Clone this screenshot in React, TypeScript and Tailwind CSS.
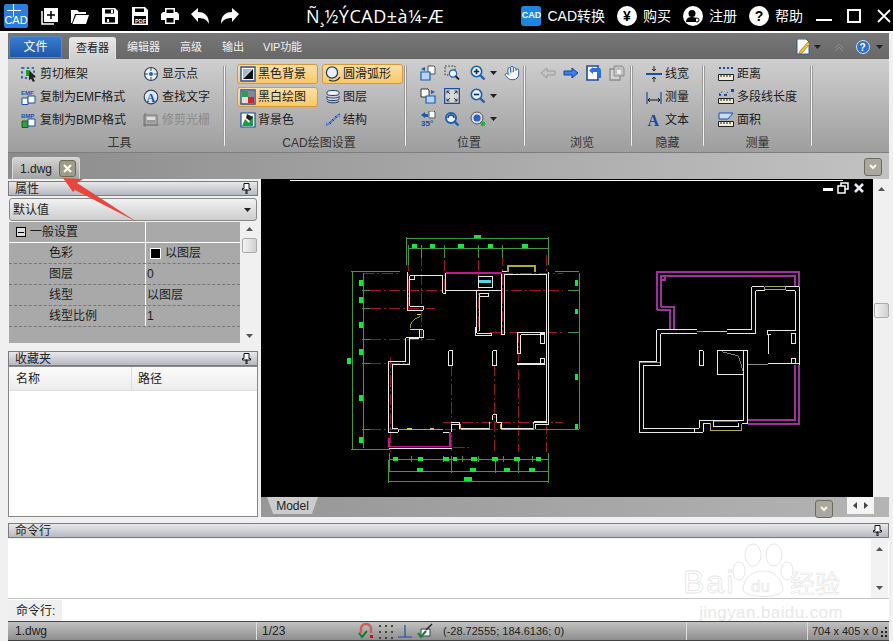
import React from "react";
import { Hand } from "lucide-react";

const Ico = ({ children, vb = "0 0 16 16", className = "w-4 h-4 shrink-0" }: { children: React.ReactNode; vb?: string; className?: string }) => (
  <svg viewBox={vb} className={className}>
    {children}
  </svg>
);

const Caret = () => (
  <svg viewBox="0 0 7 4" className="w-[7px] h-[4px] shrink-0">
    <path d="M0 0h7L3.5 4z" fill="#222" />
  </svg>
);

const Zoomer = ({ sign }: { sign: "+" | "-" }) => (
  <Ico>
    <circle cx="6.5" cy="6.5" r="5.2" fill="#e8f0fa" stroke="#1c5fb0" strokeWidth="1.6" />
    <path d="M3.8 6.5h5.4" stroke="#102a50" strokeWidth="1.6" />
    {sign === "+" && <path d="M6.5 3.8v5.4" stroke="#102a50" strokeWidth="1.6" />}
    <path d="M10.5 10.5l4 4" stroke="#1c5fb0" strokeWidth="2.4" />
  </Ico>
);

const icons: Record<string, React.ReactNode> = {
  cut: (
    <Ico>
      <path d="M1 2h12v10H1z" fill="none" stroke="#1450a8" strokeWidth="1.6" strokeDasharray="2.4 2.4" />
      <path d="M5 4h3v6H5z" fill="#14a030" />
      <path d="M8 4l7 7-3 .5 2 3.5-2 1-2-3.5-2 2z" fill="#222" />
    </Ico>
  ),
  emf: (
    <Ico>
      <text x="0" y="5.5" fontSize="6" fontWeight="700" fill="#1450c0" fontFamily="Liberation Sans">EMF</text>
      <path d="M1 9h6v6.5H1z" fill="#fff" stroke="#1450a8" />
      <path d="M7 7h7v7H7z" fill="#fff" stroke="#1450a8" />
    </Ico>
  ),
  bmp: (
    <Ico>
      <text x="0" y="5.5" fontSize="6" fontWeight="700" fill="#1450c0" fontFamily="Liberation Sans">BMP</text>
      <path d="M1 9h6v6.5H1z" fill="#30a040" stroke="#186020" />
      <path d="M7 7h7v7H7z" fill="#fff" stroke="#1450a8" />
    </Ico>
  ),
  point: (
    <Ico>
      <circle cx="8" cy="8" r="6.5" fill="#eef2f8" stroke="#38465c" strokeWidth="1.2" />
      <path d="M8 1v4M8 11v4M1 8h4M11 8h4" stroke="#38465c" />
      <circle cx="8" cy="8" r="2" fill="#1c60c8" />
    </Ico>
  ),
  find: (
    <Ico>
      <circle cx="8" cy="8" r="6.8" fill="#dce6f4" stroke="#38465c" strokeWidth="1.2" />
      <text x="3.4" y="12.5" fontSize="12" fontWeight="700" fill="#1450b0" fontFamily="Liberation Serif">A</text>
    </Ico>
  ),
  trim: (
    <Ico>
      <path d="M2 1v14M0 13h16M1 3h13v10H1z" fill="none" stroke="#777" />
      <path d="M4 5h8v6H4z" fill="#999" />
      <path d="M4 5h8v3H4z" fill="#ddd" />
    </Ico>
  ),
  blackBg: (
    <Ico>
      <path d="M1 1h14v14H1z" fill="#f4f4f4" stroke="#24509c" strokeWidth="1.4" />
      <path d="M13 3v10H3z" fill="#111" />
      <path d="M3 3h9L3 12z" fill="#a8b8d0" />
    </Ico>
  ),
  arc: (
    <Ico>
      <circle cx="7" cy="6.5" r="5.6" fill="#e8f0fa" stroke="#24406c" strokeWidth="1.3" />
      <path d="M4 14c4 2 9 1 11-3" fill="none" stroke="#222" strokeWidth="1.2" />
    </Ico>
  ),
  bw: (
    <Ico>
      <path d="M1 1h14v14H1z" fill="#fff" stroke="#24509c" strokeWidth="1.4" />
      <path d="M2 2h6v6H2z" fill="#2ca050" />
      <path d="M8 8h6v6H8z" fill="#d02828" />
      <path d="M2 8h6v6H2z" fill="#e0e0e0" />
      <path d="M8 2h6v6H8z" fill="#888" />
    </Ico>
  ),
  layers: (
    <Ico>
      <path d="M2 3c0-2 12-2 12 0v2c0 2-12 2-12 0z" fill="#eef2f8" stroke="#24406c" />
      <path d="M2 7.5c0 2 12 2 12 0M2 7.5v2.5c0 2 12 2 12 0V7.5" fill="#dbe4f0" stroke="#24406c" />
      <path d="M2 12c0 2.5 12 2.5 12 0" fill="none" stroke="#24406c" />
    </Ico>
  ),
  bgColor: (
    <Ico>
      <path d="M1 1h14v14H1z" fill="#fff" stroke="#1c4c9c" strokeWidth="1.2" />
      <path d="M2 14L5 7l4 4 4-8v11z" fill="#1c9c3c" />
      <path d="M7 2l6 3-3 4-4-3z" fill="#222" />
    </Ico>
  ),
  struct: (
    <Ico>
      <path d="M1 13C4 13 5 10 8 8s4-5 7-6" fill="none" stroke="#2c60c0" strokeWidth="1.6" />
      <path d="M1 10c2 4 5 2 7-2s5-6 7-3" fill="none" stroke="#6c90d8" strokeWidth="1.4" />
      <path d="M4 10l2 2M7 7l2 2M10 4l2 2" stroke="#24406c" />
    </Ico>
  ),
  posA: (
    <Ico>
      <path d="M8 1h6l1 1v7H8z" fill="#fff" stroke="#555" />
      <path d="M1 7h9v8H1z" fill="#b8d4f4" stroke="#1c5cb0" strokeWidth="1.2" />
      <path d="M1 4l4-2v4z" fill="#1c5cb0" />
    </Ico>
  ),
  posB: (
    <Ico>
      <path d="M1 1h7l1 1v7H1z" fill="#fff" stroke="#333" />
      <path d="M6 8h9v7H6z" fill="#b8d4f4" stroke="#1c5cb0" strokeWidth="1.2" />
      <path d="M15 4l-4-2v4z" fill="#1c5cb0" />
    </Ico>
  ),
  rotate: (
    <Ico>
      <path d="M9 0h5l1 1v6H9z" fill="#fff" stroke="#555" />
      <path d="M1 4l4-3v2h3v3H5v1z" fill="#1c5cb0" />
      <text x="1" y="15" fontSize="8" fontWeight="700" fill="#1450a0" fontFamily="Liberation Sans">35°</text>
    </Ico>
  ),
  window: (
    <Ico>
      <path d="M1 1h10v9H1z" fill="none" stroke="#333" strokeDasharray="1.6 1.6" />
      <circle cx="9" cy="8.5" r="3.6" fill="#eef4fc" stroke="#1c5fb0" strokeWidth="1.2" />
      <path d="M11.5 11l3.5 3.5" stroke="#222" strokeWidth="1.8" />
    </Ico>
  ),
  fit: (
    <Ico>
      <path d="M.7.7h14.6v14.6H.7z" fill="#d8d8d8" stroke="#1c4c9c" strokeWidth="1.3" />
      <path d="M3 3l3 3M3 3v2.5M3 3h2.5M13 3l-3 3M13 3v2.5M13 3h-2.5M3 13l3-3M3 13v-2.5M3 13h2.5M13 13l-3-3M13 13v-2.5M13 13h-2.5" stroke="#222" strokeWidth=".9" fill="none" />
    </Ico>
  ),
  prevZoom: (
    <Ico>
      <circle cx="7" cy="7" r="5" fill="#e8f0fa" stroke="#1c5fb0" strokeWidth="2" />
      <path d="M4 7a3 3 0 0 1 6 0" fill="none" stroke="#14408c" strokeWidth="1.4" />
      <path d="M10 10l4.5 4.5" stroke="#1c5fb0" strokeWidth="2.4" />
    </Ico>
  ),
  globe: (
    <Ico>
      <circle cx="7" cy="7" r="6" fill="#dde" stroke="#555" />
      <circle cx="7" cy="7" r="3.6" fill="#2464c4" />
      <path d="M11 11l2.5 2.5" stroke="#444" strokeWidth="2" />
      <circle cx="13" cy="13" r="2.4" fill="#30b040" />
    </Ico>
  ),
  backGray: (
    <Ico>
      <path d="M1 8l6-5v3h8v4H7v3z" fill="#c4c4c4" stroke="#9a9a9a" />
    </Ico>
  ),
  forward: (
    <Ico>
      <path d="M15 8L9 3v3H1v4h8v3z" fill="#3a80e8" stroke="#14409c" />
    </Ico>
  ),
  undoView: (
    <Ico>
      <path d="M1 1h11v14H1z" fill="#fff" stroke="#1c4c9c" strokeWidth="1.6" />
      <path d="M7 3h7l1 2v8h-4V7H7v2L3 5.500 7 2z" fill="#2c70d8" />
    </Ico>
  ),
  redoView: (
    <Ico>
      <path d="M1 4h10v11H1z" fill="#d4d4d4" stroke="#8c8c8c" strokeWidth="1.3" />
      <path d="M5 1h8l2 2v8H5z" fill="#c0c0c0" stroke="#8c8c8c" />
      <path d="M8 5h4v4H8z" fill="#ececec" />
    </Ico>
  ),
  lineWidth: (
    <Ico>
      <path d="M0 8h16" stroke="#1450b0" strokeWidth="2" />
      <path d="M8 0v5M6 3l2 2 2-2M8 16v-5M6 13l2-2 2 2" stroke="#222" fill="none" />
    </Ico>
  ),
  measure: (
    <Ico>
      <path d="M1 3v12M15 3v12" stroke="#1450a8" strokeWidth="1.2" />
      <path d="M2 11h12M4 9l-2 2 2 2M12 9l2 2-2 2" stroke="#111" fill="none" />
    </Ico>
  ),
  text: (
    <Ico className="w-4 h-4 shrink-0 overflow-visible">
      <text x="1.500" y="14" fontSize="16" fontWeight="700" fill="#1448a8" fontFamily="Liberation Serif">A</text>
    </Ico>
  ),
  dist: (
    <Ico>
      <path d="M1 2h14" stroke="#1450b0" strokeWidth="2" strokeDasharray="2 2" />
      <path d="M.5 8.500h15v6H.500z" fill="#f0ecd8" stroke="#222" />
      <path d="M3 9v2M6 9v2M9 9v2M12 9v2" stroke="#222" />
    </Ico>
  ),
  poly: (
    <Ico>
      <path d="M1 5l4-3M7 6l3-3" stroke="#1450b0" strokeDasharray="1.500 1" />
      <path d="M1 5h2v2H1zM6 5h3v2H6zM13 0h3v3h-3z" fill="#1450b0" />
      <path d="M.5 9.500h15v5H.500z" fill="#f0ecd8" stroke="#222" />
      <path d="M3 10v2M6 10v2M9 10v2M12 10v2" stroke="#222" />
    </Ico>
  ),
  area: (
    <Ico>
      <path d="M1 1h14l-5 6H1z" fill="#c8dcf4" stroke="#1450b0" />
      <path d="M.5 9.500h15v5H.500z" fill="#f0ecd8" stroke="#222" />
      <path d="M3 10v2M6 10v2M9 10v2M12 10v2" stroke="#222" />
    </Ico>
  ),
};

const Sep = () => <div className="w-[3px] my-[6px] rounded-sm bg-[#f2f2f2] border-x border-[#9a9a9a] shrink-0" />;

const Item = ({ icon, label, disabled }: { icon: string; label: string; disabled?: boolean }) => (
  <div className="flex items-center h-[20px] gap-[3px]">
    {icons[icon]}
    <span className={`text-xs whitespace-nowrap ${disabled ? "text-[#8a8a8a]" : "text-[#1c1c1c]"}`}>{label}</span>
  </div>
);

const Toggle = ({ icon, label, active }: { icon: string; label: string; active?: boolean }) => (
  <div
    className={`flex items-center w-[81px] h-[20px] pl-[2px] gap-[2px] rounded-[3px] border ${
      active ? "border-[#d4993a] bg-gradient-to-b from-[#f9e0a6] to-[#fcc766]" : "border-transparent"
    }`}
  >
    {icons[icon]}
    <span className="text-xs text-[#1c1c1c] whitespace-nowrap">{label}</span>
  </div>
);

const Group = ({ width, label, labelClass = "", children }: { width: string; label: string; labelClass?: string; children: React.ReactNode }) => (
  <div className={`${width} flex flex-col shrink-0`}>
    <div className="h-[73px] pt-[5px]">{children}</div>
    <div className={`h-[20px] pt-px flex items-center justify-center text-xs text-[#333] ${labelClass}`}>{label}</div>
  </div>
);

const Pin = () => (
  <svg viewBox="0 0 9 11" className="w-[9px] h-[11px] shrink-0">
    <path d="M2 .500h5v5h1.500v1.500H.500V5.500H2zM4 7h1v4H4z" fill="#fff" stroke="#111" strokeWidth="1" />
  </svg>
);

const PanelHeader = ({ title, pin = true }: { title: string; pin?: boolean }) => (
  <div className="h-[15px] flex items-center justify-between pl-[6px] pr-[6px] border border-[#7c7c7c] bg-gradient-to-b from-[#e8e9ec] to-[#b6b9c0] shrink-0">
    <span className="text-xs leading-none text-[#222]">{title}</span>
    {pin && <Pin />}
  </div>
);

const ChevronBtn = () => (
  <div className="w-[18px] h-[18px] rounded-[3px] border border-[#6c6c5c] bg-[#a8a8a0] flex items-center justify-center shrink-0">
    <svg viewBox="0 0 8 6" className="w-2 h-[6px]">
      <path d="M1 1l3 3 3-3" fill="none" stroke="#fff6d8" strokeWidth="2" />
    </svg>
  </div>
);

const PropRow = ({ name, value, swatch }: { name: string; value: string; swatch?: boolean }) => (
  <div className="h-[21px] flex border-b border-dashed border-[#777]">
    <div className="w-[137px] pl-[40px] flex items-center text-xs text-[#1c1c1c] border-r border-white shrink-0">{name}</div>
    <div className="pl-px flex items-center gap-[4px] text-xs text-[#1c1c1c]">
      {swatch && <span className="w-[11px] h-[11px] ml-[3px] bg-black border border-white" />}
      {value}
    </div>
  </div>
);

const TopBtn = ({ children }: { children: React.ReactNode }) => <div className="w-[18px] h-[20px] flex items-center justify-center">{children}</div>;

const NavBtn = ({ children, label }: { children: React.ReactNode; label: string }) => (
  <div className="flex items-center gap-[6px]">
    {children}
    <span className="text-sm text-white whitespace-nowrap">{label}</span>
  </div>
);

const RoundIcon = ({ children }: { children: React.ReactNode }) => (
  <div className="w-5 h-5 rounded-full bg-white text-black flex items-center justify-center text-sm font-bold leading-none shrink-0">{children}</div>
);

const TitleBar = () => (
  <div className="h-[31px] bg-black flex items-center shrink-0">
    <div className="ml-[4px] w-6 h-6 bg-[#2c7de0] rounded-[2px] relative overflow-hidden text-white text-[11px] leading-none flex items-end justify-center pb-[2px] shrink-0">
      CAD
      <span className="absolute left-[9px] top-0 w-px h-[13px] bg-white" />
      <span className="absolute left-[3px] top-[6px] w-[14px] h-px bg-white" />
    </div>
    <div className="ml-[13px] flex items-center gap-[12px]">
      <TopBtn>
        <svg viewBox="0 0 18 18" className="w-[18px] h-[18px]">
          <path d="M1 4v13h12" fill="none" stroke="#fff" strokeWidth="1.500" />
          <path d="M3 1h14v14H3z" fill="#fff" />
          <path d="M10 4v8M6 8h8" stroke="#000" strokeWidth="1.500" />
        </svg>
      </TopBtn>
      <TopBtn>
        <svg viewBox="0 0 18 16" className="w-[18px] h-4">
          <path d="M0 2h6l2 2h7v2H4L1 15H0z" fill="#fff" />
          <path d="M5 7h13l-3 9H1.500z" fill="#fff" />
        </svg>
      </TopBtn>
      <TopBtn>
        <svg viewBox="0 0 16 16" className="w-4 h-4">
          <path fillRule="evenodd" d="M0 0h13l3 3v13H0zM3 1.500v4h9v-4zM3 9v5.500h10V9z" fill="#fff" />
          <path d="M9 2h2v3H9zM5 11h2v3H5z" fill="#fff" />
        </svg>
      </TopBtn>
      <TopBtn>
        <svg viewBox="0 0 16 18" className="w-4 h-[18px]">
          <path fillRule="evenodd" d="M0 0h13l3 3v15H0zM3 1.500v3.500h9V1.500zM2 9v7.500h12V9z" fill="#fff" />
          <text x="3" y="15.500" fontSize="5.500" fontWeight="700" fill="#fff" fontFamily="Liberation Sans">PDF</text>
        </svg>
      </TopBtn>
      <TopBtn>
        <svg viewBox="0 0 18 16" className="w-[18px] h-4">
          <path fillRule="evenodd" d="M4 0h10v4h2l2 2v6h-4v4H4v-4H0V6l2-2h2zM5.500 1.500V5h7V1.500zM5.500 10v4.500h7V10z" fill="#fff" />
        </svg>
      </TopBtn>
      <TopBtn>
        <svg viewBox="0 0 18 16" className="w-[18px] h-4">
          <path d="M0 6l7-6v4c6 0 11 3 11 12-2-4-5-6-11-6v4z" fill="#fff" />
        </svg>
      </TopBtn>
      <TopBtn>
        <svg viewBox="0 0 18 16" className="w-[18px] h-4">
          <path d="M18 6l-7-6v4C5 4 0 7 0 16c2-4 5-6 11-6v4z" fill="#fff" />
        </svg>
      </TopBtn>
    </div>
    <div className="ml-[67px] text-[18px] tracking-[0.5px] leading-none text-white whitespace-nowrap font-['Open_Sans',sans-serif]">Ñ¸½ÝCAD±à¼-Æ</div>
    <div className="ml-auto flex items-center gap-[12px] pr-[2px]">
      <NavBtn label="CAD转换">
        <div className="w-5 h-5 rounded-[3px] bg-[#1f86e0] text-white text-[9px] font-bold leading-none flex items-center justify-center shrink-0">CAD</div>
      </NavBtn>
      <NavBtn label="购买">
        <RoundIcon>¥</RoundIcon>
      </NavBtn>
      <NavBtn label="注册">
        <div className="w-5 h-5 rounded-full bg-white shrink-0">
          <svg viewBox="0 0 20 20" className="w-5 h-5">
            <circle cx="9" cy="7.500" r="3.500" fill="#000" />
            <path d="M3 16c0-4 3-5 6-5s4 1 4 1v4z" fill="#000" />
            <circle cx="14" cy="14" r="2" fill="none" stroke="#000" />
          </svg>
        </div>
      </NavBtn>
      <NavBtn label="帮助">
        <RoundIcon>?</RoundIcon>
      </NavBtn>
      <div className="w-4 h-[2px] bg-white mt-[8px] ml-px" />
      <div className="w-[14px] h-[14px] border-2 border-white ml-[3px]" />
      <svg viewBox="0 0 14 14" className="w-[14px] h-[14px] ml-[4px]">
        <path d="M1 1l12 12M13 1L1 13" stroke="#fff" strokeWidth="1.800" />
      </svg>
    </div>
  </div>
);

const RibbonTabs = () => (
  <div className="h-[26px] bg-gradient-to-b from-[#777777] to-[#686868] flex items-end shrink-0">
    <div className="ml-px mb-px w-[53px] h-[22px] rounded-t-[3px] bg-gradient-to-b from-[#3a7cd0] to-[#1f58a8] border border-[#5a88c0] text-white text-xs flex items-center justify-center">文件</div>
    <div className="ml-[7px] w-[47px] h-[22px] rounded-t-[3px] bg-gradient-to-b from-[#e8e8e8] to-[#cfcfcf] border border-b-0 border-[#e4e4e4] text-[11px] text-[#222] flex items-center justify-center">查看器</div>
    <div className="ml-[11px] h-[22px] text-[11px] text-[#f0f0f0] flex items-center gap-[20px] mb-px">
      <span>编辑器</span>
      <span>高级</span>
      <span>输出</span>
      <span className="-ml-px tracking-[-0.2px]">VIP功能</span>
    </div>
    <div className="ml-auto pr-[6px] h-[22px] mb-px flex items-center text-white">
      <svg viewBox="0 0 16 16" className="w-4 h-4">
        <path d="M2 0h9l3 3v12H2z" fill="#fff" stroke="#2c5ca0" />
        <path d="M15 5L7 14l-3 1 1-3 8-9z" fill="#f0c030" stroke="#a05020" strokeWidth=".6" />
      </svg>
      <span className="ml-[3px]"><Caret /></span>
      <svg viewBox="0 0 10 8" className="w-[10px] h-2 ml-[13px]">
        <path d="M1 5l4-4 4 4M1 8l4-4 4 4" fill="none" stroke="#8c8c8c" />
      </svg>
      <svg viewBox="0 0 14 14" className="w-[14px] h-[14px] ml-[12px]">
        <circle cx="7" cy="7" r="6.500" fill="#2c70d0" stroke="#cfe0f8" />
        <text x="3.500" y="11" fontSize="10" fontWeight="700" fill="#fff" fontFamily="Liberation Sans">?</text>
      </svg>
      <span className="ml-[6px]"><Caret /></span>
    </div>
  </div>
);

const Ribbon = () => (
  <div className="h-[94px] bg-gradient-to-b from-[#cfcfcf] to-[#9e9e9e] border-b border-[#7e7e7e] flex shrink-0">
    <Group width="w-[215px]" label="工具" labelClass="pl-[8px]">
      <div className="pl-[13px] grid grid-cols-[122px_1fr] gap-y-[3px]">
        <Item icon="cut" label="剪切框架" />
        <Item icon="point" label="显示点" />
        <Item icon="emf" label="复制为EMF格式" />
        <Item icon="find" label="查找文字" />
        <Item icon="bmp" label="复制为BMP格式" />
        <Item icon="trim" label="修剪光栅" disabled />
      </div>
    </Group>
    <Sep />
    <Group width="w-[178px]" label="CAD绘图设置" labelClass="pl-[8px]">
      <div className="pl-[11px] grid grid-cols-[85px_81px] gap-y-[3px]">
        <Toggle icon="blackBg" label="黑色背景" active />
        <Toggle icon="arc" label="圆滑弧形" active />
        <Toggle icon="bw" label="黑白绘图" active />
        <Toggle icon="layers" label="图层" />
        <Toggle icon="bgColor" label="背景色" />
        <Toggle icon="struct" label="结构" />
      </div>
    </Group>
    <Sep />
    <Group width="w-[116px]" label="位置" labelClass="pl-[8px]">
      <div className="pl-[13px] pt-px grid grid-cols-[24px_26px_34px_16px] gap-y-[7px]">
        {icons.posA}
        {icons.window}
        <div className="flex items-center gap-[4px]"><Zoomer sign="+" /><Caret /></div>
        <Hand className="w-4 h-4 text-[#2c5ca0] fill-white" strokeWidth={1.500} />
        {icons.posB}
        {icons.fit}
        <div className="flex items-center gap-[4px]"><Zoomer sign="-" /><Caret /></div>
        <div />
        {icons.rotate}
        {icons.prevZoom}
        <div className="flex items-center gap-[4px]">{icons.globe}<Caret /></div>
      </div>
    </Group>
    <Sep />
    <Group width="w-[104px]" label="浏览" labelClass="pl-[8px]">
      <div className="pl-[14px] pt-px flex gap-[7px]">
        {icons.backGray}
        {icons.forward}
        {icons.undoView}
        {icons.redoView}
      </div>
    </Group>
    <Sep />
    <Group width="w-[69px]" label="隐藏">
      <div className="pl-[13px] flex flex-col gap-[3px]">
        <Item icon="lineWidth" label="线宽" />
        <Item icon="measure" label="测量" />
        <Item icon="text" label="文本" />
      </div>
    </Group>
    <Sep />
    <Group width="w-[105px]" label="测量">
      <div className="pl-[13px] flex flex-col gap-[3px]">
        <Item icon="dist" label="距离" />
        <Item icon="poly" label="多段线长度" />
        <Item icon="area" label="面积" />
      </div>
    </Group>
    <Sep />
  </div>
);

const DocStrip = () => (
  <div className="h-[26px] bg-gradient-to-r from-[#8c8c8c] to-[#c2c2c2] flex items-end shrink-0">
    <div className="ml-[4px] w-[68px] h-[22px] rounded-t-[3px] border border-b-0 border-[#d8d8d8] bg-gradient-to-b from-[#d4d4d4] to-[#a4a4a4] flex items-center justify-between pl-[7px] pr-[3px]">
      <span className="text-xs text-[#222]">1.dwg</span>
      <div className="w-[17px] h-[17px] rounded-[3px] border border-[#6c6c50] bg-[#9c9c8c] flex items-center justify-center">
        <svg viewBox="0 0 9 9" className="w-[9px] h-[9px]">
          <path d="M1 1l7 7M8 1L1 8" stroke="#fffbe8" strokeWidth="2.200" />
        </svg>
      </div>
    </div>
    <div className="ml-auto mr-[7px] mb-[3px]"><ChevronBtn /></div>
  </div>
);

const ScrollArrows = ({ children }: { children: React.ReactNode }) => (
  <div className="w-[18px] bg-[#f0f0f0] flex flex-col items-center justify-between py-[5px] shrink-0">{children}</div>
);

const UpArrow = () => <svg viewBox="0 0 7 4" className="w-[7px] h-1"><path d="M0 4h7L3.500 0z" fill="#555" /></svg>;
const DownArrow = () => <svg viewBox="0 0 7 4" className="w-[7px] h-1"><path d="M0 0h7L3.500 4z" fill="#555" /></svg>;

const Thumb = () => <div className="w-[15px] h-[15px] rounded-[2px] border border-[#aaa] bg-gradient-to-r from-[#f4f4f4] to-[#d0d0d0]" />;

const LeftPanels = () => (
  <div className="w-[250px] flex flex-col shrink-0">
    <div className="h-[2px]" />
    <PanelHeader title="属性" />
    <div className="h-[2px]" />
    <div className="h-[23px] mx-px rounded-[3px] border border-[#888] bg-gradient-to-b from-[#f2f2f2] to-[#cdcdcd] flex items-center justify-between pl-[3px] pr-[5px] text-xs text-[#222] shrink-0">
      默认值
      <Caret />
    </div>
    <div className="h-px" />
    <div className="h-[121px] ml-px flex bg-[#a9a9a9] shrink-0">
      <div className="flex-1 flex flex-col">
        <div className="h-[21px] flex border-b border-white">
          <div className="w-[137px] pl-[7px] flex items-center gap-[4px] text-xs text-[#1c1c1c] border-r border-white shrink-0">
            <span className="w-[10px] h-[10px] border border-black bg-[#ddd] flex items-center justify-center">
              <span className="w-[6px] h-px bg-black" />
            </span>
            一般设置
          </div>
        </div>
        <PropRow name="色彩" value="以图层" swatch />
        <PropRow name="图层" value="0" />
        <PropRow name="线型" value="以图层" />
        <PropRow name="线型比例" value="1" />
      </div>
      <ScrollArrows>
        <div className="flex flex-col items-center gap-[7px]">
          <UpArrow />
          <Thumb />
        </div>
        <DownArrow />
      </ScrollArrows>
    </div>
    <div className="h-[8px]" />
    <PanelHeader title="收藏夹" />
    <div className="flex-1 border border-[#888] bg-white flex flex-col">
      <div className="h-[24px] flex bg-gradient-to-b from-[#fbfbfb] to-[#ececec] border-b border-[#ddd] text-xs text-[#222] items-center">
        <span className="w-[123px] pl-[7px] h-full flex items-center border-r border-[#ddd]">名称</span>
        <span className="pl-[6px]">路径</span>
      </div>
    </div>
  </div>
);

const wallsA = [
  "M232 140V256H280V244H240V152H338V205H348V145",
  "M175 622V410H228V338H280V315H268V340H238V420H187V612H205V622H175",
  "M348 197H515M515 205V140H530M523 205V150H650",
  "M650 150V590H612M656 140V600H616V612",
  "M362 592H390V612H480V592M364 622V600H390",
  "M340 622H364M178 672H366",
  "M440 197V325H485V332H436V305",
  "M448 205V318M448 205H475V215H450",
  "M515 205V330H524V205",
  "M562 322H645V330H572V386H562Z",
  "M564 415H645V420H564Z",
  "M632 325H645V357H632Z",
  "M632 400H645V415H632Z",
  "M357 377H369V423H357Z",
  "M488 377H500V423H488Z",
  "M488 585V570H500V592H516V612H610V592H650",
  "M240 152H255V164H240Z",
  "M445 155H488V188H445Z",
];

const greenA = [
  "M229 35V120M657 35V120M229 40H657",
  "M235 60V120M235 70H655M274 60V100M343 60V100M446 60V100M519 60V100M655 60V100",
  "M62 140H210M67 140V675M62 675H180",
  "M100 145V670M95 197H120M95 251H120M95 345H120M95 415H120M95 615H120",
  "M675 140H748M748 145V612M715 197H748M715 322H748M620 615H748",
  "M180 685V740M180 705H655M245 692V712M340 692V712M364 692V745M397 692V712M445 692V712M520 692V712M607 692V712M655 685V775",
  "M178 740H655M496 705V745M565 705V745",
  "M175 705V775M175 770H657",
];

const blocksA: number[][] = [
  [432, 30, 20, 10],
  [245, 57, 17, 13], [300, 57, 15, 13], [385, 57, 17, 13], [474, 57, 16, 13], [575, 57, 18, 13],
  [52, 398, 11, 20],
  [87, 165, 13, 17], [87, 217, 13, 16], [87, 290, 13, 18], [87, 372, 13, 18], [87, 509, 13, 18], [87, 636, 13, 17],
  [735, 165, 10, 17], [735, 252, 10, 16], [735, 448, 10, 17], [735, 597, 10, 15],
  [188, 695, 17, 12], [264, 695, 16, 12], [340, 695, 18, 12], [370, 695, 10, 12], [424, 695, 18, 12], [486, 695, 18, 12], [553, 695, 17, 12], [618, 695, 15, 12],
  [262, 730, 18, 10], [420, 730, 17, 10], [521, 730, 18, 10], [598, 730, 18, 10],
  [403, 757, 22, 11],
];

const redA = [
  "M100 145H210M515 145H700M120 197H340M430 197H700M120 251H315M120 345H315",
  "M480 322H700M120 415H240M120 615H640M615 615H720M340 592H700M370 668H425",
  "M235 105V250M274 90V350M343 105V200M446 105V320M519 90V330M651 90V680",
  "M364 420V680M494 420V680M565 320V680M182 395V680",
];

const wallsB = [
  "M58 320V532H250V505H270M70 332V520H238V497H370V288",
  "M58 320H110V225H230M70 332H122V237H230",
  "M320 225H395V95H432M320 237H407V107H435",
  "M497 95H538V330M497 107H526V228H442V240H452M447 240V296M445 325H538",
  "M383 288V505H365M292 288H383M292 288V360H370",
  "M238 287H250V332H238Z",
  "M514 235H526V267H514Z",
  "M514 310H526V325H514Z",
  "M85 520H225V532",
  "M280 497V515H355V505",
];

const FloorPlan = () => (
  <svg viewBox="261 179 612 318" className="absolute inset-0 w-[612px] h-[318px]" shapeRendering="crispEdges" fill="none">
    <path d="M290 180.500H843" stroke="#fff" strokeWidth="1.200" />
    <g transform="translate(330 225) scale(0.3333)" strokeWidth="3">
      {redA.map((d) => (
        <path key={d} d={d} stroke="#a01428" strokeDasharray="34 8 6 8" />
      ))}
      {greenA.map((d) => (
        <path key={d} d={d} stroke="#3f9a3f" />
      ))}
      {blocksA.map(([x, y, w, h]) => (
        <rect key={`${x}-${y}`} x={x} y={y} width={w} height={h} fill="#12e83c" />
      ))}
      {wallsA.map((d) => (
        <path key={d} d={d} stroke="#e8e8e8" />
      ))}
      <path d="M348 145H515" stroke="#c4188c" strokeWidth="6" />
      <path d="M178 640V665H360V622" stroke="#c4188c" strokeWidth="5" />
      <path d="M535 140V122H615V140" stroke="#b0a838" strokeWidth="6" />
      <path d="M392 596V613H480V596M512 596V613H612V596" stroke="#d8a040" strokeWidth="3" />
      <path d="M205 615H340" stroke="#d89040" strokeWidth="3" />
      <path d="M240 313H274M262 268H274" stroke="#f0e020" strokeWidth="4" />
      <path d="M240 310C242 290 255 280 270 275" stroke="#e8e080" strokeWidth="2" />
      <path d="M448 170H482" stroke="#50d8e8" strokeWidth="8" />
      <path d="M232 612H245M300 612H312" stroke="#c8d830" strokeWidth="5" />
    </g>
    <g transform="translate(620 255) scale(0.3333)" strokeWidth="3">
      <path d="M110 165V50H538V95M122 155V62H526V95M110 165H150V222M122 155H162V222" stroke="#a030a0" strokeWidth="6" />
      <path d="M122 62H135V75H122Z" stroke="#a030a0" strokeWidth="4.500" />
      <path d="M538 330V507H383M526 330V495H383M280 497H355" stroke="#a030a0" strokeWidth="6" />
      {wallsB.map((d) => (
        <path key={d} d={d} stroke="#e8e8e8" />
      ))}
      <path d="M383 330H445M230 229H250M120 322H60" stroke="#8c8c8c" strokeWidth="3" />
      <path d="M305 290L355 303L370 350" stroke="#9c9c9c" strokeWidth="2.400" />
      <path d="M250 230H320" stroke="#e8e820" strokeWidth="5" />
      <path d="M272 505V528H365V507" stroke="#b0a850" strokeWidth="3" />
      <path d="M435 96H497V105H435Z" stroke="#a8a860" strokeWidth="3" />
    </g>
  </svg>
);

const Canvas = () => (
  <div className="flex-1 flex flex-col min-w-0">
    <div className="flex-1 flex min-h-0">
      <div className="w-[612px] bg-black relative shrink-0">
        <FloorPlan />
        <svg viewBox="0 0 42 14" className="absolute top-[3px] left-[562px] w-[42px] h-[14px]" fill="none">
          <path d="M0 6h10v3H0z" fill="#fff" />
          <path d="M15 4h7v7h-7zM18 4V1h7v6h-3" stroke="#fff" strokeWidth="1.500" />
          <path d="M32 2l8 8M40 2l-8 8" stroke="#e8e8f0" strokeWidth="2.600" />
        </svg>
      </div>
      <div className="flex-1 bg-[#f0f0f0] flex flex-col items-center pt-[8px]">
        <UpArrow />
        <div className="mt-[112px]"><Thumb /></div>
      </div>
    </div>
    <div className="h-[20px] bg-gradient-to-r from-[#979797] to-[#b4b4b4] flex items-start shrink-0">
      <div
        className="ml-[6px] w-[51px] h-[17px] bg-[#cccccc] flex items-center justify-center text-xs text-[#222] [clip-path:polygon(0_0,100%_0,88%_100%,12%_100%)]"
      >
        Model
      </div>
      <div className="ml-[497px] mt-[3px]"><ChevronBtn /></div>
      <div className="ml-[14px] w-[27px] h-[17px] bg-[#f4f4f4] flex items-center justify-center gap-[7px]">
        <svg viewBox="0 0 4 7" className="w-1 h-[7px]"><path d="M4 0v7L0 3.500z" fill="#444" /></svg>
        <svg viewBox="0 0 4 7" className="w-1 h-[7px]"><path d="M0 0v7l4-3.500z" fill="#444" /></svg>
      </div>
    </div>
  </div>
);

const CommandPanel = () => (
  <div className="flex flex-col shrink-0">
    <PanelHeader title="命令行" />
    <div className="h-px" />
    <div className="h-[60px] bg-white flex justify-end border-b border-[#c4c4c4] relative">
      <div className="w-[17px] mr-px bg-[#f2f2f2] flex flex-col items-center justify-between py-[8px]">
        <UpArrow />
        <DownArrow />
      </div>
      <svg viewBox="0 0 170 56" className="absolute right-[44px] top-[4px] w-[170px] h-[56px]" fill="none">
        <ellipse cx="78" cy="12" rx="8" ry="11" stroke="#e6e6e6" />
        <ellipse cx="99" cy="12" rx="8" ry="11" stroke="#e6e6e6" />
        <ellipse cx="64" cy="28" rx="6" ry="9" stroke="#e6e6e6" />
        <ellipse cx="112" cy="28" rx="6" ry="9" stroke="#e6e6e6" />
        <path d="M68 46c2-14 12-18 20-18s18 4 20 18c1 10-40 10-40 0z" stroke="#e6e6e6" />
        <text x="8" y="50" fontSize="32" letterSpacing="2" fontFamily="Liberation Sans" stroke="#e6e6e6" strokeWidth=".8" fill="#fff">Bai</text>
        <text x="76" y="49" fontSize="17" fontFamily="Liberation Sans" stroke="#e6e6e6" strokeWidth=".7" fill="#fff">du</text>
        <text x="115" y="50" fontSize="25" fontFamily="Noto Sans CJK SC" stroke="#e6e6e6" strokeWidth=".7" fill="#fff">经验</text>
      </svg>
    </div>
    <div className="h-px bg-white" />
    <div className="h-[21px] flex relative">
      <div className="w-[54px] bg-[#efefef] flex items-center pl-[8px] text-xs text-[#222]">命令行:</div>
      <div className="flex-1 bg-white" />
      <span className="absolute right-[46px] top-[3px] text-[17px] leading-[20px] tracking-[0.4px] text-[#e8e8e8]">jingyan.baidu.com</span>
    </div>
  </div>
);

const StatusCell = ({ width, children, className = "" }: { width: string; children?: React.ReactNode; className?: string }) => (
  <div className={`${width} h-full flex items-center border-r border-[#dcdcdc] shrink-0 ${className}`}>{children}</div>
);

const StatusBar = () => (
  <div className="h-[20px] bg-gradient-to-b from-[#c2c2c2] to-[#8e8e8e] border-y border-[#444] flex text-xs text-[#222] relative z-10">
    <StatusCell width="w-[249px]" className="pl-[7px]">1.dwg</StatusCell>
    <div className="w-[101px] pl-[5px] flex items-center shrink-0">1/23</div>
    <div className="w-[85px] flex items-center gap-[3px] shrink-0">
      <svg viewBox="0 0 16 16" className="w-4 h-4">
        <path d="M3 10V6a5 5 0 0 1 10 0v4" fill="none" stroke="#c86060" strokeWidth="2.500" />
        <path d="M1 10l3 4 5-6" fill="none" stroke="#108030" strokeWidth="2" />
        <path d="M12 12h3v3h-3z" fill="#d01010" />
      </svg>
      <svg viewBox="0 0 16 16" className="w-4 h-4 ml-px">
        <path d="M1 2h2v2H1zM7 2h2v2H7zM13 2h2v2h-2zM1 8h2v2H1zM7 8h2v2H7zM13 8h2v2h-2zM1 14h2v2H1zM7 14h2v2H7zM13 14h2v2h-2z" fill="#444" />
      </svg>
      <svg viewBox="0 0 16 16" className="w-4 h-4">
        <path d="M8 2v12M1 14h14" fill="none" stroke="#1850a8" strokeWidth="1.200" />
      </svg>
      <svg viewBox="0 0 16 16" className="w-4 h-4 ml-px">
        <path d="M4 6h9v7H4z" fill="#f4f4f4" stroke="#345" />
        <path d="M9 7l6-6" stroke="#222" strokeWidth="1.500" />
        <path d="M1 10l3 4 5-6" fill="none" stroke="#108030" strokeWidth="2" />
      </svg>
    </div>
    <StatusCell width="w-[244px]" className="text-[11px]">(-28.72555; 184.6136; 0)</StatusCell>
    <StatusCell width="w-[121px]" />
    <div className="flex-1 pl-[4px] flex items-center justify-between pr-[2px] text-[11px] whitespace-nowrap">
      704 x 405 x 0
      <svg viewBox="0 0 11 11" className="w-[11px] h-[11px] shrink-0">
        <path d="M7 1h2v2H7zM7 5h2v2H7zM3 5h2v2H3zM7 9h2v2H7zM3 9h2v2H3z" fill="#222" />
      </svg>
    </div>
  </div>
);

const AnnotationArrow = () => (
  <svg viewBox="0 0 893 641" className="absolute inset-0 w-[893px] h-[641px] pointer-events-none z-20">
    <path d="M63 178L83 179L77 183L137 222L75 190L73 192z" fill="#e8453c" />
  </svg>
);

export default function App() {
  return (
    <div className="w-[893px] h-[641px] relative overflow-hidden bg-[#f0f0f0] flex flex-col font-['Liberation_Sans','Noto_Sans_CJK_SC',sans-serif]">
      <TitleBar />
      <div className="h-[2px] bg-white shrink-0" />
      <div className="flex-1 flex flex-col pl-[8px] pr-[4px] min-h-0">
        <RibbonTabs />
        <Ribbon />
        <DocStrip />
        <div className="h-[338px] flex shrink-0">
          <LeftPanels />
          <div className="w-[3px] shrink-0" />
          <Canvas />
        </div>
        <div className="h-[6px] shrink-0" />
        <CommandPanel />
        <StatusBar />
      </div>
      <AnnotationArrow />
    </div>
  );
}
